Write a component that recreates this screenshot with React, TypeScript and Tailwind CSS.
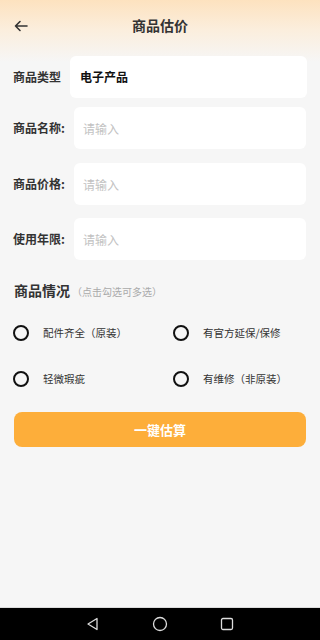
import { useState } from 'react'

const font = { fontFamily: '"Noto Sans CJK SC", "Noto Sans", sans-serif' }

const fields = [
  { label: '商品名称:', mt: 'mt-[9px]' },
  { label: '商品价格:', mt: 'mt-[14px]' },
  { label: '使用年限:', mt: 'mt-[13px]' },
]

const options = ['配件齐全（原装）', '有官方延保/保修', '轻微瑕疵', '有维修（非原装）']

export default function App() {
  const [checked, setChecked] = useState<string[]>([])

  const toggle = (opt: string) => {
    setChecked((prev) => (prev.includes(opt) ? prev.filter((o) => o !== opt) : [...prev, opt]))
  }

  return (
    <div
      className="flex h-[640px] w-[320px] flex-col bg-[linear-gradient(180deg,#fde2bf_0px,#fbeedd_30px,#f6f6f6_62px)] text-[#222]"
      style={font}
    >
      <div className="flex-1">
        <div className="relative flex h-[52px] items-center justify-center">
          <button className="absolute left-[13px] top-[18px] text-[#333]">
            <svg width="16" height="16" viewBox="0 0 16 16" fill="none" stroke="currentColor" strokeWidth="1.6" strokeLinecap="round" strokeLinejoin="round">
              <path d="M14 8H2.5M7 3.5L2.5 8 7 12.5" />
            </svg>
          </button>
          <h1 className="-mt-[2px] text-[14px] font-bold text-[#333]">商品估价</h1>
        </div>

        <div className="mt-[4px] flex items-center pl-[13px] pr-[13px]">
          <span className="w-[48px] shrink-0 text-[12px] font-semibold leading-none text-[#333]">商品类型</span>
          <div className="ml-[9px] flex h-[42px] flex-1 items-center rounded-[6px] bg-white pl-[10px] text-[12px] font-bold text-[#111]">
            电子产品
          </div>
        </div>

        {fields.map((f) => (
          <div key={f.label} className={`${f.mt} flex items-center pl-[13px] pr-[14px]`}>
            <span className="w-[52px] shrink-0 text-[12px] font-semibold leading-none text-[#333]">{f.label}</span>
            <input
              placeholder="请输入"
              className="ml-[9px] h-[42px] flex-1 rounded-[6px] bg-white pl-[9px] text-[12px] outline-none placeholder:text-[#c2c2c2]"
            />
          </div>
        ))}

        <div className="mt-[20px] flex items-baseline pl-[14px]">
          <span className="text-[14px] font-bold text-[#333]">商品情况</span>
          <span className="ml-[2px] text-[10px] text-[#aaa]">（点击勾选可多选）</span>
        </div>

        <div className="mt-[24px] grid grid-cols-[160px_1fr] gap-y-[30px] pl-[13px]">
          {options.map((opt) => (
            <button key={opt} onClick={() => toggle(opt)} className="flex h-[16px] items-center text-left">
              <span
                className={`h-[16px] w-[16px] shrink-0 rounded-full border-2 ${
                  checked.includes(opt) ? 'border-[#fcae3a] bg-[#fcae3a]' : 'border-[#111]'
                }`}
              />
              <span className="ml-[14px] text-[10.5px] text-[#333]">{opt}</span>
            </button>
          ))}
        </div>

        <div className="mt-[25px] px-[14px]">
          <button className="flex h-[35px] w-full items-center justify-center rounded-[8px] bg-[#fdae3a] text-[13px] font-bold text-white">
            一键估算
          </button>
        </div>
      </div>

      <div className="border-t border-[#dcdcdc]" />
      <div className="flex h-[32px] items-center justify-center gap-[52px] bg-black">
        <svg width="14" height="14" viewBox="0 0 14 14" fill="none" stroke="#ddd" strokeWidth="1.3" strokeLinejoin="round">
          <path d="M11 1.5V12.5L2 7Z" />
        </svg>
        <svg width="16" height="16" viewBox="0 0 16 16" fill="none" stroke="#ddd" strokeWidth="1.3">
          <circle cx="8" cy="8" r="6.5" />
        </svg>
        <svg width="14" height="14" viewBox="0 0 14 14" fill="none" stroke="#ddd" strokeWidth="1.3">
          <rect x="1.5" y="1.5" width="11" height="11" rx="1.5" />
        </svg>
      </div>
    </div>
  )
}
